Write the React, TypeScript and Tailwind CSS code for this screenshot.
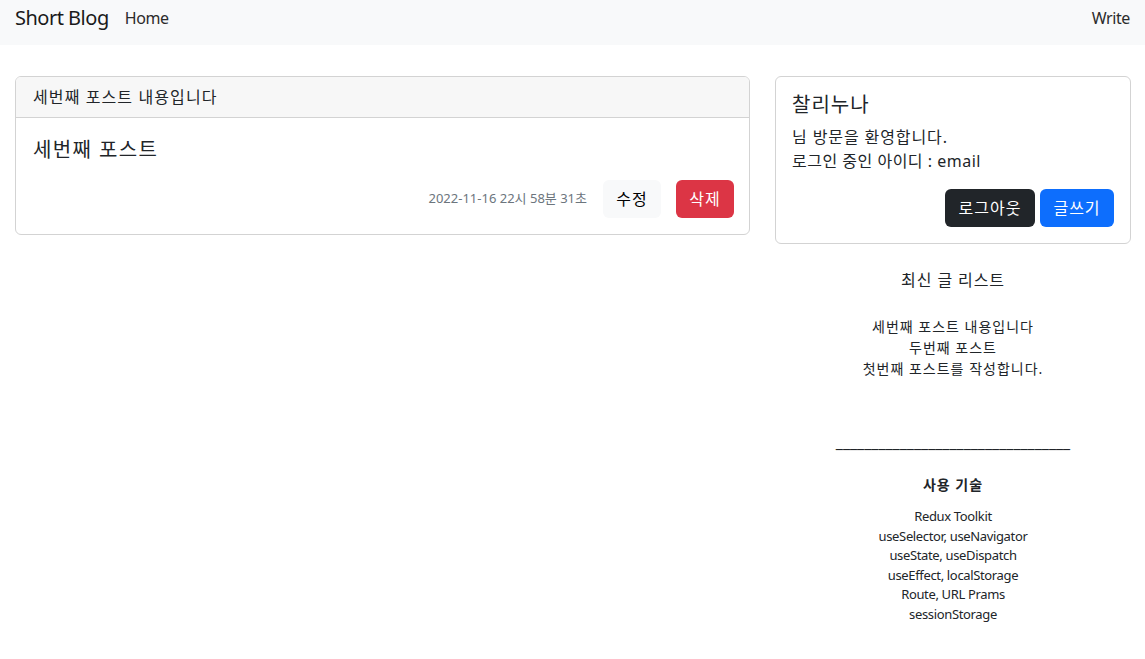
const font = "font-['Noto_Sans','Noto_Sans_CJK_KR',sans-serif]";

function Navbar() {
  return (
    <nav className="flex h-[45px] items-center justify-between bg-[#f8f9fa] pb-[9px] pl-[15px] pr-[15px]">
      <div className="flex items-center">
        <a className="mr-[16px] text-[20px] tracking-[-0.5px] text-[#1a1a1a]">Short Blog</a>
        <a className="text-[16px] tracking-[-0.4px] text-[#2b2b2b]">Home</a>
      </div>
      <a className="text-[16px] tracking-[-0.4px] text-[#2b2b2b]">Write</a>
    </nav>
  );
}

function PostCard() {
  return (
    <div className="w-[735px] self-start overflow-hidden rounded-[6px] border border-[#d3d3d3]">
      <div className="flex h-[41px] items-center border-b border-[#d3d3d3] bg-[#f7f7f7] px-[17px] text-[16px] tracking-[1.1px] text-[#212529]">
        세번째 포스트 내용입니다
      </div>
      <div className="pb-[16px] pl-[17px] pr-[15px] pt-[20px]">
        <h5 className="text-[20px] leading-[24px] tracking-[1.4px] text-[#212529]">세번째 포스트</h5>
        <div className="mt-[18px] flex items-center justify-end">
          <span className="mr-[16px] text-[13px] text-[#6c757d]">2022-11-16 22시 58분 31초</span>
          <button className="mr-[15px] h-[38px] w-[58px] rounded-[6px] bg-[#f8f9fa] text-[16px] tracking-[1px] text-black">수정</button>
          <button className="h-[38px] w-[58px] rounded-[6px] bg-[#dc3545] text-[16px] tracking-[1px] text-white">삭제</button>
        </div>
      </div>
    </div>
  );
}

function Sidebar() {
  const posts = ['세번째 포스트 내용입니다', '두번째 포스트', '첫번째 포스트를 작성합니다.'];
  const tech = [
    'Redux Toolkit',
    'useSelector, useNavigator',
    'useState, useDispatch',
    'useEffect, localStorage',
    'Route, URL Prams',
    'sessionStorage',
  ];
  return (
    <div className="w-[356px]">
      <div className="rounded-[6px] border border-[#d3d3d3] p-[16px]">
        <h5 className="mb-[8px] text-[20px] leading-[24px] tracking-[1px] text-[#212529]">찰리누나</h5>
        <p className="text-[16px] leading-[24px] tracking-[0.9px] text-[#212529]">님 방문을 환영합니다.</p>
        <p className="text-[16px] leading-[24px] tracking-[0.5px] text-[#212529]">로그인 중인 아이디 : email</p>
        <div className="mt-[16px] flex justify-end gap-[5px]">
          <button className="h-[38px] w-[90px] rounded-[6px] bg-[#212529] text-[16px] tracking-[1px] text-white">로그아웃</button>
          <button className="h-[38px] w-[74px] rounded-[6px] bg-[#0d6efd] text-[16px] tracking-[1px] text-white">글쓰기</button>
        </div>
      </div>
      <div className="text-center text-[#212529]">
        <div className="mt-[24px] text-[16px] leading-[24px] tracking-[0.9px]">최신 글 리스트</div>
        <div className="mt-[24px] text-[14px] leading-[21px] tracking-[1px]">
          {posts.map((p) => (
            <div key={p}>{p}</div>
          ))}
        </div>
        <div className="mt-[51px] text-[16px] leading-[24px]">_________________________________</div>
        <div className="mt-[20px] text-[14px] font-bold leading-[21px] tracking-[1px]">사용 기술</div>
        <div className="mt-[12px] text-[13px] leading-[19.5px] tracking-[-0.35px]">
          {tech.map((t) => (
            <div key={t}>{t}</div>
          ))}
        </div>
      </div>
    </div>
  );
}

export default function App() {
  return (
    <div className={`min-h-screen bg-white ${font}`}>
      <Navbar />
      <main className="flex justify-between pl-[15px] pr-[14px] pt-[31px]">
        <PostCard />
        <Sidebar />
      </main>
    </div>
  );
}
